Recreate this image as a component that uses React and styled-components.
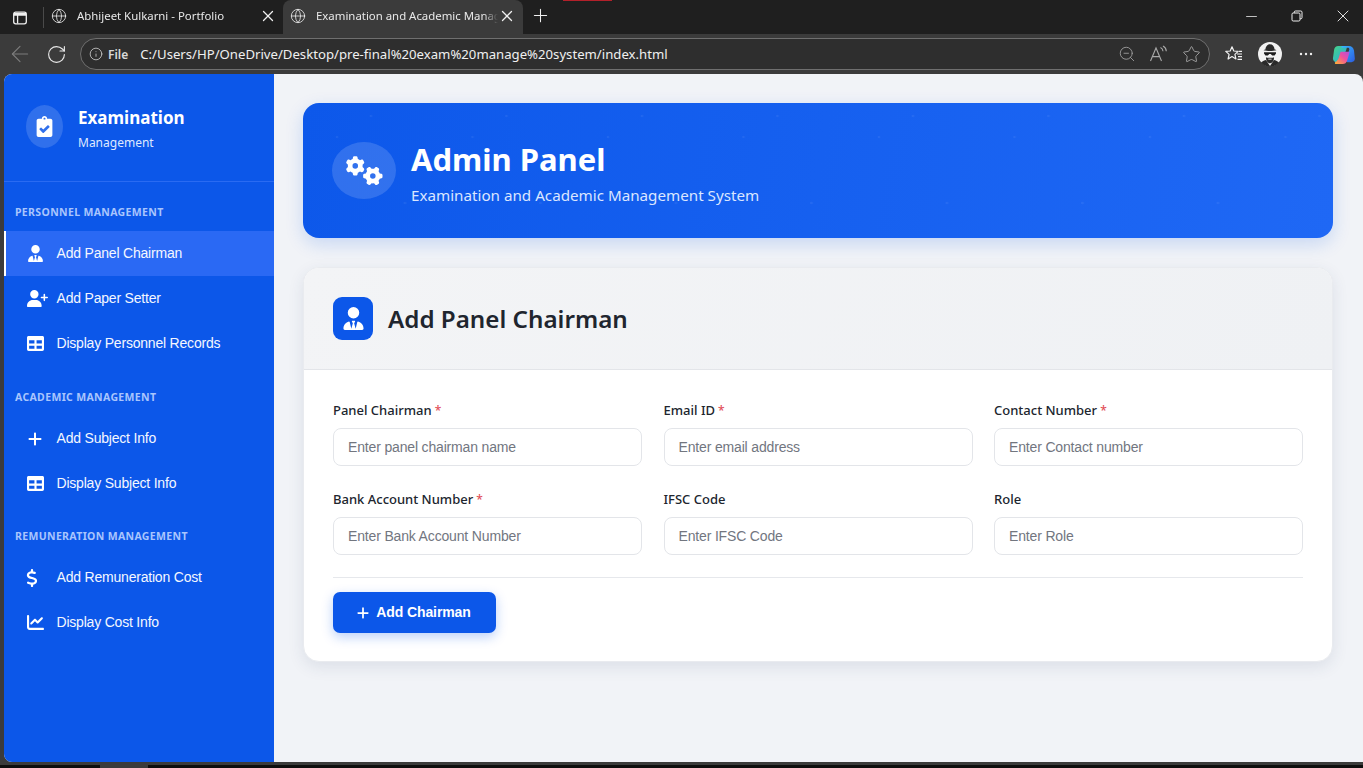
import React from 'react';
import styled, { createGlobalStyle } from 'styled-components';
import { FaClipboardCheck, FaTable } from 'react-icons/fa';
import { FaUserTie, FaUserPlus, FaPlus, FaDollarSign, FaChartLine, FaGears } from 'react-icons/fa6';
import { Globe, X, Plus, ArrowLeft, RotateCw, Info, ZoomOut, Star, Minus } from 'lucide-react';

const GlobalStyle = createGlobalStyle`
  html, body { margin: 0; padding: 0; height: 768px; overflow: hidden; background: #3b3b3b; }
  * { box-sizing: border-box; }
`;

const uiFont = `"Noto Sans", "Open Sans", sans-serif`;
const plainFont = `"Liberation Sans", Arial, sans-serif`;

const Shell = styled.div`
  width: 1363px;
  height: 768px;
  display: flex;
  flex-direction: column;
  background: #3b3b3b;
  font-family: ${uiFont};
  position: relative;
`;

const RedMark = styled.div`
  position: absolute;
  left: 563px;
  top: 0;
  width: 49px;
  height: 1px;
  background: #b3202a;
`;

const TabStrip = styled.div`
  height: 34px;
  flex: none;
  background: #1f1f1f;
  display: flex;
  align-items: stretch;
  color: #f0f0f0;
`;

const PanelBtn = styled.div`
  width: 44px;
  display: flex;
  align-items: center;
  justify-content: center;
  padding-right: 4px;
  border-right: 1px solid #4a4a4a;
  margin: 7px 0 6px;
`;

const Tab = styled.div`
  width: ${p => p.$w}px;
  display: flex;
  align-items: center;
  padding: 0 ${p => (p.$active ? 7 : 6)}px 3px 7px;
  background: ${p => (p.$active ? '#3b3b3b' : 'transparent')};
  border-radius: 8px 8px 0 0;
`;

const TabTitle = styled.span`
  flex: 1;
  margin-left: 10px;
  font-size: 11.4px;
  white-space: nowrap;
  overflow: hidden;
  color: #e8e8e8;
  mask-image: linear-gradient(90deg, #000 92%, transparent 100%);
`;

const NewTab = styled.div`
  width: 34px;
  display: flex;
  align-items: center;
  justify-content: center;
  padding-bottom: 3px;
`;

const Spacer = styled.div`
  flex: 1;
`;

const WinBtn = styled.div`
  width: 46px;
  display: flex;
  align-items: center;
  justify-content: center;
  padding: 0 0 2px 6px;
`;

const Toolbar = styled.div`
  height: 40px;
  flex: none;
  background: #3b3b3b;
  display: flex;
  align-items: center;
  padding: 0 0 0 2px;
  color: #e8e8e8;
`;

const NavBtn = styled.div`
  width: 36px;
  display: flex;
  justify-content: center;
  color: ${p => (p.$dim ? '#7d7d7d' : '#e8e8e8')};
`;

const AddressBar = styled.div`
  width: 1130px;
  height: 32px;
  margin-left: 6px;
  border: 1px solid #6f6f6f;
  border-radius: 16px;
  background: #2e2e2e;
  display: flex;
  align-items: center;
  padding: 0 2px 0 8px;
`;

const FileTag = styled.span`
  font-size: 12px;
  font-weight: 600;
  color: #d8d8d8;
  margin: 0 12px 0 5px;
`;

const Url = styled.span`
  flex: 1;
  font-size: 13.17px;
  color: #f0f0f0;
  white-space: nowrap;
`;

const BarIcon = styled.div`
  width: 32px;
  display: flex;
  justify-content: center;
  color: #a8a8a8;
`;

const ToolIcon = styled.div`
  width: 36px;
  display: flex;
  justify-content: center;
  align-items: center;
  margin-left: ${p => p.$ml || 0}px;
`;

const Viewport = styled.div`
  height: 688px;
  flex: none;
  margin-left: 4px;
  display: flex;
  background: #f1f3f7;
  border-radius: 8px 8px 0 8px;
  overflow: hidden;
`;

const BottomEdge = styled.div`
  height: 3px;
  flex: none;
  background: #3b3b3b;
`;

const Taskbar = styled.div`
  height: 3px;
  flex: none;
  background: #0e0e0e;
  padding-left: 100px;
`;

const TaskbarMark = styled.div`
  width: 48px;
  height: 3px;
  background: #3b3b3b;
`;

const Sidebar = styled.aside`
  width: 270px;
  flex: none;
  background: #0c57e9;
  color: #fff;
`;

const Brand = styled.div`
  height: 108px;
  display: flex;
  align-items: center;
  padding: 0 0 2px 22px;
  border-bottom: 1px solid #2a6bf2;
`;

const BrandBadge = styled.div`
  width: 37px;
  height: 43px;
  border-radius: 50%;
  background: rgba(255, 255, 255, 0.15);
  display: flex;
  align-items: center;
  justify-content: center;
  font-size: 21px;
  margin-right: 15px;
`;

const BrandName = styled.div`
  font-size: 17px;
  font-weight: 700;
  line-height: 24px;
  margin-top: 5px;
`;

const BrandSub = styled.div`
  font-size: 12px;
  line-height: 18px;
  margin-top: 4px;
  color: #dfe9ff;
`;

const SectionLabel = styled.div`
  font-size: 10.5px;
  font-weight: 700;
  letter-spacing: 0.35px;
  color: #a9c5fd;
  text-transform: uppercase;
  padding-left: 11px;
  height: 14px;
  line-height: 14px;
  margin: ${p => p.$mt}px 0 12px;
`;

const NavItem = styled.div`
  height: 45px;
  display: flex;
  align-items: center;
  padding-left: ${p => (p.$active ? 21 : 23)}px;
  font-family: ${plainFont};
  font-size: 14px;
  letter-spacing: -0.2px;
  color: #f4f7ff;
  background: ${p => (p.$active ? '#2a69f4' : 'transparent')};
  border-left: ${p => (p.$active ? '2px solid #fff' : 'none')};
`;

const NavIcon = styled.span`
  width: 29.5px;
  flex: none;
  display: flex;
  align-items: center;
  font-size: 17px;
  color: #fff;
`;

const NavText = styled.span`
  padding-bottom: 2px;
`;

const DollarIcon = styled(FaDollarSign)`
  margin-left: -4px;
`;

const Main = styled.main`
  flex: 1;
  padding: 29px 30px 0 29px;
`;

const Banner = styled.header`
  height: 135px;
  border-radius: 16px;
  display: flex;
  align-items: center;
  padding: 0 0 0 29px;
  color: #fff;
  background-color: #1460ee;
  background-image:
    radial-gradient(circle at 68px 13px, rgba(255, 255, 255, 0.06) 1px, transparent 1.6px),
    radial-gradient(circle at 34px 34px, rgba(255, 255, 255, 0.06) 1px, transparent 1.6px),
    radial-gradient(circle at 102px 100px, rgba(255, 255, 255, 0.06) 1px, transparent 1.6px),
    linear-gradient(100deg, #0d58ea 0%, #1f68f5 100%);
  background-size: 135.5px 135px, 135.5px 135px, 135.5px 135px, 100% 100%;
  box-shadow: 0 6px 18px rgba(13, 88, 234, 0.18);
`;

const BannerBadge = styled.div`
  width: 64px;
  height: 57px;
  border-radius: 50%;
  background: rgba(255, 255, 255, 0.15);
  display: flex;
  align-items: center;
  justify-content: center;
  font-size: 37px;
  margin-right: 15px;
`;

const BannerText = styled.div`
  padding-top: 2px;
`;

const BannerTitle = styled.h1`
  margin: 0;
  font-size: 31px;
  font-weight: 700;
  line-height: 42px;
`;

const BannerSub = styled.p`
  margin: 4px 0 0;
  font-size: 15.2px;
  line-height: 22px;
  color: #dbe6ff;
`;

const Card = styled.section`
  margin-top: 29px;
  height: 395px;
  background: #fff;
  border-radius: 16px;
  overflow: hidden;
  border: 1px solid #e9ebef;
  box-shadow: 0 5px 16px rgba(40, 60, 100, 0.1);
`;

const CardHead = styled.div`
  height: 102px;
  background: linear-gradient(120deg, #f3f4f6 0%, #eff1f4 100%);
  border-bottom: 1px solid #e3e5e9;
  display: flex;
  align-items: center;
  padding-left: 29px;
`;

const HeadIcon = styled.div`
  width: 40px;
  height: 43px;
  border-radius: 9px;
  background: #0c57e9;
  color: #fff;
  display: flex;
  align-items: center;
  justify-content: center;
  font-size: 23px;
  margin-right: 15px;
`;

const CardTitle = styled.h2`
  margin: 0;
  font-size: 24.2px;
  font-weight: 600;
  color: #20252e;
`;

const CardBody = styled.div`
  padding: 31px 29px 0;
`;

const FormGrid = styled.div`
  display: grid;
  grid-template-columns: repeat(3, 1fr);
  column-gap: 21.5px;
  row-gap: 24px;
`;

const Field = styled.div`
  display: flex;
  flex-direction: column;
`;

const Label = styled.label`
  font-size: 13px;
  font-weight: 500;
  line-height: 18px;
  height: 18px;
  margin-bottom: 9px;
  color: #20252e;
`;

const Req = styled.span`
  color: #e2505a;
  font-size: 12px;
`;

const Input = styled.input`
  height: 38px;
  width: 100%;
  border: 1px solid #e3e5e9;
  border-radius: 8px;
  padding: 0 14px 1px;
  font-family: ${plainFont};
  font-size: 14px;
  letter-spacing: -0.16px;
  background: #fff;
  outline: none;
  &::placeholder { color: #72767f; opacity: 1; }
`;

const Divider = styled.hr`
  border: 0;
  border-top: 1px solid #e6e8ec;
  margin: 22px 0 14px;
`;

const SubmitBtn = styled.button`
  width: 163px;
  height: 41px;
  border: 0;
  border-radius: 7px;
  padding: 0 2px 0 0;
  background: #0c57e9;
  color: #fff;
  font-family: ${plainFont};
  font-size: 14px;
  font-weight: 700;
  letter-spacing: -0.1px;
  display: flex;
  align-items: center;
  justify-content: center;
  gap: 6px;
  box-shadow: 0 4px 12px rgba(12, 87, 233, 0.28);
`;

const SubmitText = styled.span`
  padding-bottom: 2px;
`;

const sections = [
  {
    title: 'Personnel Management',
    mt: 23,
    items: [
      { label: 'Add Panel Chairman', icon: <FaUserTie />, active: true },
      { label: 'Add Paper Setter', icon: <FaUserPlus size={21} /> },
      { label: 'Display Personnel Records', icon: <FaTable size={17} /> },
    ],
  },
  {
    title: 'Academic Management',
    mt: 24,
    items: [
      { label: 'Add Subject Info', icon: <FaPlus size={16} /> },
      { label: 'Display Subject Info', icon: <FaTable size={17} /> },
    ],
  },
  {
    title: 'Remuneration Management',
    mt: 23,
    items: [
      { label: 'Add Remuneration Cost', icon: <DollarIcon size={18} /> },
      { label: 'Display Cost Info', icon: <FaChartLine size={17} /> },
    ],
  },
];

const fields = [
  { label: 'Panel Chairman', placeholder: 'Enter panel chairman name', required: true },
  { label: 'Email ID', placeholder: 'Enter email address', required: true },
  { label: 'Contact Number', placeholder: 'Enter Contact number', required: true },
  { label: 'Bank Account Number', placeholder: 'Enter Bank Account Number', required: true },
  { label: 'IFSC Code', placeholder: 'Enter IFSC Code' },
  { label: 'Role', placeholder: 'Enter Role' },
];

const PanelIcon = () => (
  <svg width="16" height="16" viewBox="0 0 16 16" fill="none" stroke="#f0f0f0" strokeWidth="1.3">
    <rect x="1.7" y="2.2" width="12.6" height="11.6" rx="2" />
    <path d="M2 5.2h12M5.6 5.2v8.4" />
    <path d="M2 3h12v2H2z" fill="#f0f0f0" stroke="none" />
  </svg>
);

const RestoreIcon = () => (
  <svg width="12" height="12" viewBox="0 0 12 12" fill="none" stroke="#f0f0f0" strokeWidth="1">
    <rect x="1" y="3" width="8" height="8" rx="1.2" />
    <path d="M3.2 3V2.2A1.2 1.2 0 0 1 4.4 1h5.4A1.2 1.2 0 0 1 11 2.2v5.4a1.2 1.2 0 0 1-1.2 1.2H9" />
  </svg>
);

const ReadAloudIcon = () => (
  <svg width="20" height="18" viewBox="0 0 20 18" fill="none" stroke="#a8a8a8" strokeWidth="1.1">
    <path d="M1.5 16 7 3l5.5 13M3.4 11.6h7.2" />
    <path d="M11.5 2.5c1.6.8 2.4 2.2 2.5 3.8M14 1c2 1 3.2 3 3.3 5.2" />
  </svg>
);

const FavListIcon = () => (
  <svg width="18" height="18" viewBox="0 0 18 18" fill="none" stroke="#f2f2f2" strokeWidth="1.2" strokeLinejoin="round">
    <path d="M7 1.8 8.8 6l4.4.4-3.3 3 1 4.5L7 11.6 3.1 14l1-4.6L.8 6.4 5.2 6z" />
    <path d="M12 9h5M13 11.7h4M12.5 14.4h4.5M14 6.4h3" />
  </svg>
);

const Avatar = () => (
  <svg width="24" height="24" viewBox="0 0 24 24">
    <circle cx="12" cy="12" r="12" fill="#f1f1f1" />
    <path d="M5.5 8.2c.4-.3 1.4-.6 1.9-.7.3-2.6 1.6-5.2 4.6-5.2s4.300 2.600 4.600 5.200c.5.100 1.500.400 1.900.700-3.700 1.100-9.300 1.100-13 0z" fill="#2a2a2a" />
    <path d="M6 10.200h12v1.400l-1.400 1.900h-2.400L12.700 12h-1.400l-1.500 1.500H7.400L6 11.600z" fill="#1c1c1c" />
    <path d="M8 15.200c1.200.800 2.600.500 4 .500s2.800.300 4-.500c.2 3-1.500 6-4 6s-4.200-3-4-6z" fill="#2a2a2a" />
    <path d="M10.300 16.700h3.400v.9h-3.400z" fill="#f1f1f1" />
    <path d="M3 20.500C5 18.800 6.600 18.500 8 18l4 5.900L16 18c1.400.5 3 .8 5 2.500A12 12 0 0 1 3 20.500z" fill="#2a2a2a" />
  </svg>
);

const CopilotLogo = () => (
  <svg width="23" height="23" viewBox="0 0 24 24" style={{ marginLeft: 3 }}>
    <defs>
      <linearGradient id="copA" x1="0" y1="0" x2="1" y2="1">
        <stop offset="0" stopColor="#38b6ff" />
        <stop offset="1" stopColor="#2c5ce0" />
      </linearGradient>
      <linearGradient id="copB" x1="0" y1="1" x2="1" y2="0">
        <stop offset="0" stopColor="#ffb52e" />
        <stop offset="0.55" stopColor="#ef4fa0" />
        <stop offset="1" stopColor="#b04fe0" />
      </linearGradient>
      <linearGradient id="copC" x1="0" y1="0" x2="1" y2="1">
        <stop offset="0" stopColor="#47d483" />
        <stop offset="1" stopColor="#27a8e8" />
      </linearGradient>
    </defs>
    <path d="M6.500 3h7.500c1.500 0 1.800 1.500 1.200 3L11 18c-.5 1.400-1.500 2.200-3 2.200H5C2.500 20 .8 18.400 1 16l1.200-9c.3-2.500 2-4 4.300-4z" fill="url(#copC)" />
    <path d="M10 3h7.500C20.500 3 22.500 5 23 8l.8 8c.3 2.500-1.500 4-3.500 4h-4c-1.500 0-2-1.200-1.500-2.700L18 7c.4-1.300-.5-2-1.500-2H10z" fill="url(#copA)" />
    <path d="M9 9h9.500l-2.800 9.500c-.6 2-2.200 3.500-4.500 3.500H4.500C3 22 2.500 20.700 3.500 19.700c2-1 3-2.700 3.600-4.700z" fill="url(#copB)" />
  </svg>
);

const BrowserChrome = () => (
  <>
    <RedMark />
    <TabStrip>
      <PanelBtn><PanelIcon /></PanelBtn>
      <Tab $w={239}>
        <Globe size={16} strokeWidth={1.2} />
        <TabTitle>Abhijeet Kulkarni - Portfolio</TabTitle>
        <X size={18} strokeWidth={1.7} />
      </Tab>
      <Tab $w={240} $active>
        <Globe size={16} strokeWidth={1.2} />
        <TabTitle>Examination and Academic Management System</TabTitle>
        <X size={18} strokeWidth={1.7} />
      </Tab>
      <NewTab><Plus size={21} strokeWidth={1.2} /></NewTab>
      <Spacer />
      <WinBtn><Minus size={17} strokeWidth={1.1} /></WinBtn>
      <WinBtn><RestoreIcon /></WinBtn>
      <WinBtn><X size={20} strokeWidth={1.1} /></WinBtn>
    </TabStrip>
    <Toolbar>
      <NavBtn $dim><ArrowLeft size={26} strokeWidth={1} /></NavBtn>
      <NavBtn><RotateCw size={21} strokeWidth={1.3} /></NavBtn>
      <AddressBar>
        <Info size={14} strokeWidth={1.3} color="#d8d8d8" />
        <FileTag>File</FileTag>
        <Url>C:/Users/HP/OneDrive/Desktop/pre-final%20exam%20manage%20system/index.html</Url>
        <BarIcon><ZoomOut size={18} strokeWidth={1.1} /></BarIcon>
        <BarIcon><ReadAloudIcon /></BarIcon>
        <BarIcon><Star size={19} strokeWidth={1.1} /></BarIcon>
      </AddressBar>
      <ToolIcon $ml={6}><FavListIcon /></ToolIcon>
      <ToolIcon><Avatar /></ToolIcon>
      <ToolIcon><svg width="14" height="4" viewBox="0 0 14 4" fill="#f0f0f0"><circle cx="2" cy="2" r="1.200" /><circle cx="7" cy="2" r="1.200" /><circle cx="12" cy="2" r="1.200" /></svg></ToolIcon>
      <ToolIcon><CopilotLogo /></ToolIcon>
    </Toolbar>
  </>
);

const App = () => {
  return (
    <Shell>
      <GlobalStyle />
      <BrowserChrome />
      <Viewport>
        <Sidebar>
          <Brand>
            <BrandBadge><FaClipboardCheck /></BrandBadge>
            <div>
              <BrandName>Examination</BrandName>
              <BrandSub>Management</BrandSub>
            </div>
          </Brand>
          {sections.map((section) => (
            <div key={section.title}>
              <SectionLabel $mt={section.mt}>{section.title}</SectionLabel>
              {section.items.map((item) => (
                <NavItem key={item.label} $active={item.active}>
                  <NavIcon>{item.icon}</NavIcon>
                  <NavText>{item.label}</NavText>
                </NavItem>
              ))}
            </div>
          ))}
        </Sidebar>
        <Main>
          <Banner>
            <BannerBadge><FaGears /></BannerBadge>
            <BannerText>
              <BannerTitle>Admin Panel</BannerTitle>
              <BannerSub>Examination and Academic Management System</BannerSub>
            </BannerText>
          </Banner>
          <Card>
            <CardHead>
              <HeadIcon><FaUserTie /></HeadIcon>
              <CardTitle>Add Panel Chairman</CardTitle>
            </CardHead>
            <CardBody>
              <FormGrid>
                {fields.map((field) => (
                  <Field key={field.label}>
                    <Label>{field.label}{field.required && <Req> *</Req>}</Label>
                    <Input placeholder={field.placeholder} />
                  </Field>
                ))}
              </FormGrid>
              <Divider />
              <SubmitBtn><FaPlus size={14} /><SubmitText>Add Chairman</SubmitText></SubmitBtn>
            </CardBody>
          </Card>
        </Main>
      </Viewport>
      <BottomEdge />
      <Taskbar><TaskbarMark /></Taskbar>
    </Shell>
  );
};

export default App;
